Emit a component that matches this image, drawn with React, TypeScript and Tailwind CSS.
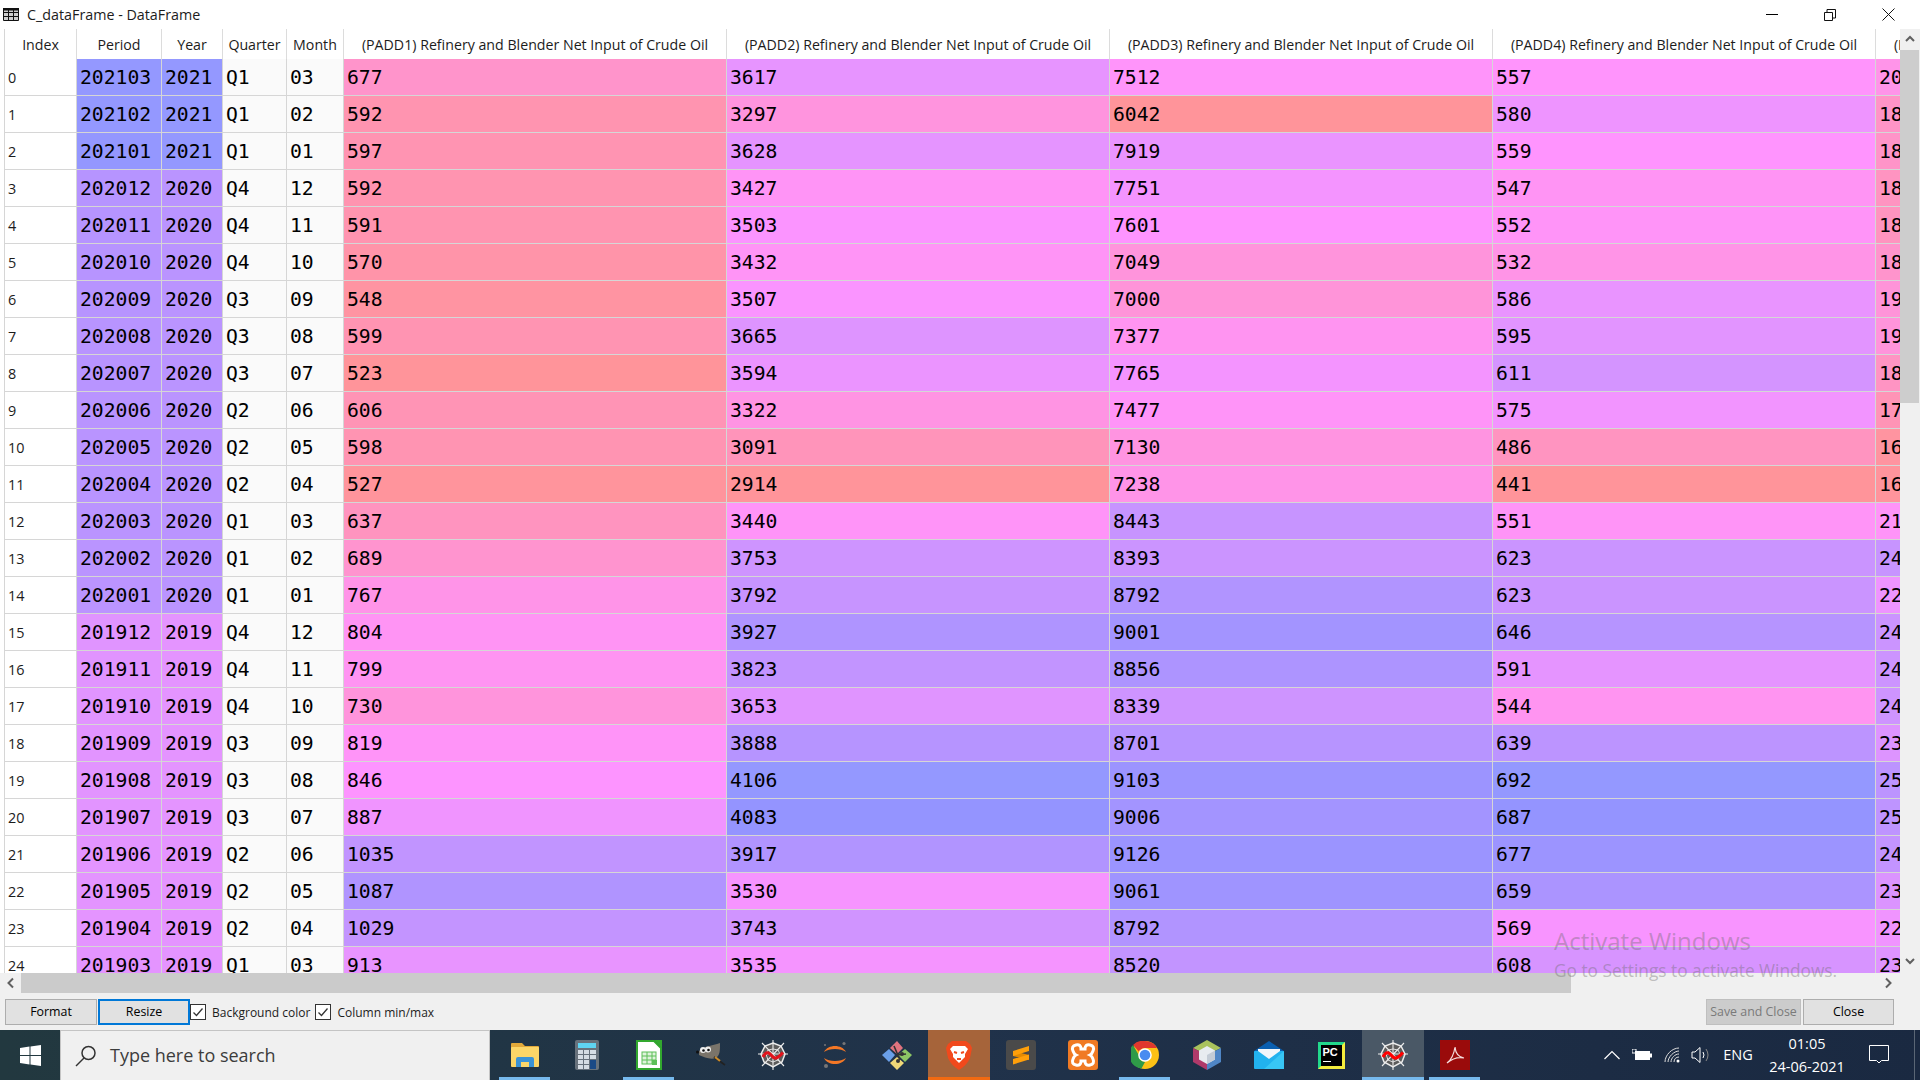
import React from "react";

// year, period etc. come straight off the screenshot; last column is clipped so only first digits matter
const rows: [string, string, string, string, number, number, number, number, number][] = [
  ["202103", "2021", "Q1", "03", 677, 3617, 7512, 557, 2034],
  ["202102", "2021", "Q1", "02", 592, 3297, 6042, 580, 1850],
  ["202101", "2021", "Q1", "01", 597, 3628, 7919, 559, 1860],
  ["202012", "2020", "Q4", "12", 592, 3427, 7751, 547, 1820],
  ["202011", "2020", "Q4", "11", 591, 3503, 7601, 552, 1810],
  ["202010", "2020", "Q4", "10", 570, 3432, 7049, 532, 1880],
  ["202009", "2020", "Q3", "09", 548, 3507, 7000, 586, 1950],
  ["202008", "2020", "Q3", "08", 599, 3665, 7377, 595, 1960],
  ["202007", "2020", "Q3", "07", 523, 3594, 7765, 611, 1830],
  ["202006", "2020", "Q2", "06", 606, 3322, 7477, 575, 1760],
  ["202005", "2020", "Q2", "05", 598, 3091, 7130, 486, 1640],
  ["202004", "2020", "Q2", "04", 527, 2914, 7238, 441, 1620],
  ["202003", "2020", "Q1", "03", 637, 3440, 8443, 551, 2120],
  ["202002", "2020", "Q1", "02", 689, 3753, 8393, 623, 2460],
  ["202001", "2020", "Q1", "01", 767, 3792, 8792, 623, 2250],
  ["201912", "2019", "Q4", "12", 804, 3927, 9001, 646, 2440],
  ["201911", "2019", "Q4", "11", 799, 3823, 8856, 591, 2430],
  ["201910", "2019", "Q4", "10", 730, 3653, 8339, 544, 2420],
  ["201909", "2019", "Q3", "09", 819, 3888, 8701, 639, 2340],
  ["201908", "2019", "Q3", "08", 846, 4106, 9103, 692, 2520],
  ["201907", "2019", "Q3", "07", 887, 4083, 9006, 687, 2510],
  ["201906", "2019", "Q2", "06", 1035, 3917, 9126, 677, 2480],
  ["201905", "2019", "Q2", "05", 1087, 3530, 9061, 659, 2350],
  ["201904", "2019", "Q2", "04", 1029, 3743, 8792, 569, 2240],
  ["201903", "2019", "Q1", "03", 913, 3535, 8520, 608, 2330],
];

const padd = (n: number) => `(PADD${n}) Refinery and Blender Net Input of Crude Oil`;

// same colour rule as the dataframe editor: hue .66 at max, .99 at min, sat .7, alpha .6 on white
function heat(v: number, min: number, max: number) {
  const h = (0.66 + (0.33 * (max - v)) / (max - min)) * 6;
  const i = Math.floor(h);
  const f = h - i;
  const p = 0.3;
  const q = 1 - 0.7 * f;
  const t = 1 - 0.7 * (1 - f);
  const rgb = [[1, t, p], [q, 1, p], [p, 1, t], [p, q, 1], [t, p, 1], [1, p, q]][i % 6];
  const [r, g, b] = rgb.map((c) => Math.round((c * 0.6 + 0.4) * 255));
  return `rgb(${r},${g},${b})`;
}

const cell = "border-r border-b border-[#d6d6d6] pl-[3px] pt-[2px] overflow-hidden whitespace-nowrap h-[37px] font-['DejaVu_Sans_Mono',monospace] text-[19.7px] text-black text-left";
const head = "border-r border-[#dcdcdc] h-[30px] pt-[2px] font-normal text-center text-[14.2px] text-[#1c1c1c] overflow-hidden whitespace-nowrap bg-white";

function Table() {
  return (
    <table className="table-fixed border-separate border-spacing-0 w-[2254px] border-l border-[#d6d6d6]">
      <colgroup>
        <col className="w-[72px]" />
        <col className="w-[85px]" />
        <col className="w-[61px]" />
        <col className="w-[64px]" />
        <col className="w-[57px]" />
        <col className="w-[383px]" />
        <col className="w-[383px]" />
        <col className="w-[383px]" />
        <col className="w-[383px]" />
        <col className="w-[383px]" />
      </colgroup>
      <thead>
        <tr>
          {["Index", "Period", "Year", "Quarter", "Month", padd(1), padd(2), padd(3), padd(4), padd(5)].map((h) => (
            <th key={h} className={head}>{h}</th>
          ))}
        </tr>
      </thead>
      <tbody>
        {rows.map((r, i) => (
          <tr key={r[0]}>
            <td className="border-r border-b border-[#d6d6d6] pl-[3px] pt-[2px] h-[37px] bg-white text-[14.4px] text-[#1c1c1c] text-left">{i}</td>
            <td className={cell} style={{ backgroundColor: heat(+r[0], 201601, 202103) }}>{r[0]}</td>
            <td className={cell} style={{ backgroundColor: heat(+r[1], 2016, 2021) }}>{r[1]}</td>
            <td className={cell + " bg-[#fafafa]"}>{r[2]}</td>
            <td className={cell + " bg-[#fafafa]"}>{r[3]}</td>
            <td className={cell} style={{ backgroundColor: heat(r[4], 523, 1190) }}>{r[4]}</td>
            <td className={cell} style={{ backgroundColor: heat(r[5], 2914, 4106) }}>{r[5]}</td>
            <td className={cell} style={{ backgroundColor: heat(r[6], 6042, 9300) }}>{r[6]}</td>
            <td className={cell} style={{ backgroundColor: heat(r[7], 441, 692) }}>{r[7]}</td>
            <td className={cell} style={{ backgroundColor: heat(r[8], 1610, 2760) }}>{r[8]}</td>
          </tr>
        ))}
      </tbody>
    </table>
  );
}

function Chevron({ dir }: { dir: "up" | "down" | "left" | "right" }) {
  const d = { up: "M2 7 L6 3 L10 7", down: "M2 4 L6 8 L10 4", left: "M8 1.5 L3.5 6 L8 10.5", right: "M4 1.5 L8.5 6 L4 10.5" }[dir];
  return (
    <svg width="12" height="12" viewBox="0 0 12 12" fill="none" stroke="#606060" strokeWidth="2">
      <path d={d} />
    </svg>
  );
}

function Check() {
  return (
    <span className="w-[16px] h-[16px] border border-[#333] bg-white flex items-center justify-center shrink-0">
      <svg width="12" height="12" viewBox="0 0 12 12" fill="none" stroke="#333" strokeWidth="1.3">
        <path d="M1.5 6.5 L4.5 9.5 L10.5 2.5" />
      </svg>
    </span>
  );
}

const Web = ({ wave = "#e0141c" }: { wave?: string }) => (
  <svg width="30" height="30" viewBox="0 0 30 30" fill="none">
    <path d="M15 3 L23 6 L27 14 L24 22 L15 27 L6 22 L3 14 L7 6 Z" fill="#5c5c5c" />
    <g stroke="#ececec" strokeWidth="1.1">
      <path d="M15 0 V30 M0 14 H30 M4 3 L26 26 M26 3 L4 26" />
      <path d="M15 3 L23 6 L27 14 L24 22 L15 27 L6 22 L3 14 L7 6 Z" strokeWidth="1.5" />
      <path d="M15 9 L20 10 L22 14 L20 20 L15 22 L10 20 L8 14 L10 10 Z" strokeWidth="0.9" />
    </g>
    <path d="M5 17 C8 11 11 12 14 16 C17 20 20 18 25 12.5" stroke={wave} strokeWidth="3.2" />
  </svg>
);

const icons: { key: string; bar?: "blue" | "orange"; bg?: string; node: React.ReactNode }[] = [
  {
    key: "explorer",
    bar: "blue",
    node: (
      <svg width="30" height="26" viewBox="0 0 30 26">
        <path d="M1 2 Q1 1 2 1 H12 L15 4 H28 Q29 4 29 5 V8 H1 Z" fill="#e2a93a" />
        <rect x="1" y="5" width="28" height="20" rx="1" fill="#fcd668" />
        <path d="M6 25 V17 Q6 15 8 15 H22 Q24 15 24 17 V25 H19 V20 H11 V25 Z" fill="#3b93d6" />
      </svg>
    ),
  },
  {
    key: "calc",
    node: (
      <svg width="24" height="30" viewBox="0 0 24 30">
        <rect width="24" height="30" rx="2" fill="#68727c" />
        <rect x="3" y="3" width="18" height="5" fill="#5fd4f2" />
        {[10, 15, 20, 25].map((y) => [3, 9].map((x) => <rect key={`${x}${y}`} x={x} y={y} width="5" height="4" fill="#d6dde4" />))}
        {[10, 15].map((y) => <rect key={y} x="15" y={y} width="6" height="4" fill="#d6dde4" />)}
        <rect x="15" y="20" width="6" height="9" fill="#1b4a86" />
      </svg>
    ),
  },
  {
    key: "localc",
    bar: "blue",
    node: (
      <svg width="26" height="30" viewBox="0 0 26 30">
        <path d="M1 1 H18 L25 8 V29 H1 Z" fill="#fff" stroke="#32a82e" strokeWidth="2" />
        <path d="M18 0 H26 V8 Z" fill="#32a82e" />
        <g stroke="#5cbf58" strokeWidth="1" fill="#dff3dc">
          <rect x="6" y="12" width="14" height="12" />
          <path d="M6 16 H20 M6 20 H20 M11 12 V24 M16 12 V24" />
        </g>
        <rect x="16" y="20" width="5" height="5" fill="#5cbf58" />
      </svg>
    ),
  },
  {
    key: "gimp",
    node: (
      <svg width="30" height="24" viewBox="0 0 30 24">
        <path d="M3 8 C8 3 16 3 24 0 C24 8 24 12 20 15 C14 17 8 14 3 12 Z" fill="#7a746a" />
        <path d="M18 14 L29 22" stroke="#222" strokeWidth="1.6" />
        <path d="M19 14 L24 18" stroke="#c98a2a" strokeWidth="2.2" />
        <circle cx="1.5" cy="9" r="1.5" fill="#111" />
        <circle cx="7" cy="7" r="3" fill="#eee" />
        <circle cx="12" cy="6.5" r="3" fill="#eee" />
        <circle cx="7.5" cy="7.5" r="1.3" fill="#111" />
        <circle cx="12.5" cy="7" r="1.3" fill="#111" />
      </svg>
    ),
  },
  { key: "spyder1", node: <Web /> },
  {
    key: "jupyter",
    node: (
      <svg width="30" height="30" viewBox="0 0 30 30" fill="#f37726">
        <path d="M4 12 C8 4 22 4 26 12 C21 8 9 8 4 12 Z" />
        <path d="M4 18 C9 22 21 22 26 18 C22 26 8 26 4 18 Z" />
        <circle cx="24" cy="3.5" r="1.6" fill="#767677" />
        <circle cx="6" cy="26" r="2" fill="#767677" />
        <circle cx="5" cy="5" r="1" fill="#767677" />
      </svg>
    ),
  },
  {
    key: "gitgui",
    node: (
      <svg width="30" height="30" viewBox="0 0 30 30">
        <path d="M15 1 L8 8 L15 14 L21 8 Z" fill="#e0737e" />
        <path d="M7 9 L0 15 L7 22 L13 15 Z" fill="#6a9fe8" />
        <path d="M23 9 L16 15 L23 22 L30 15 Z" fill="#8cc665" />
        <path d="M15 17 L8 23 L15 30 L22 23 Z" fill="#f0d878" />
        <path d="M12 6 L18 20 M15 15 L24 14" stroke="#333" strokeWidth="1.6" />
        <circle cx="16" cy="21" r="2" fill="#333" />
        <circle cx="20" cy="14" r="2" fill="#333" />
      </svg>
    ),
  },
  {
    key: "brave",
    bar: "orange",
    bg: "bg-[#a6643a]",
    node: (
      <svg width="26" height="30" viewBox="0 0 26 30">
        <path d="M6 1 H20 L24 4 L26 8 L24 18 C22 23 18 27 13 30 C8 27 4 23 2 18 L0 8 L2 4 Z" fill="#f1491c" />
        <path d="M7 6 H19 L22 9 L19 14 L19 17 L15 21 L13 23 L11 21 L7 17 L7 14 L4 9 Z" fill="#fff" />
        <path d="M8 12 L11 13 M18 12 L15 13 M11 19 H15" stroke="#f1491c" strokeWidth="2" />
      </svg>
    ),
  },
  {
    key: "sublime",
    node: (
      <svg width="30" height="30" viewBox="0 0 30 30">
        <rect width="30" height="30" rx="3" fill="#4a4a4a" />
        <path d="M7 11 L23 15 V20 L7 16 Z" fill="#e58a00" />
        <path d="M7 11 L23 6 V11 L7 16 Z M7 19 L23 14.5 V19.5 L7 24.5 Z" fill="#ff9f0a" />
      </svg>
    ),
  },
  {
    key: "xampp",
    node: (
      <svg width="30" height="30" viewBox="0 0 30 30">
        <rect width="30" height="30" rx="3" fill="#f07a24" />
        <path d="M8 5 Q13 4 13 9 H17 Q17 4 22 5 Q27 6 25 11 Q24 14 22 15 Q24 16 25 19 Q27 24 22 25 Q17 26 17 21 H13 Q13 26 8 25 Q3 24 5 19 Q6 16 8 15 Q6 14 5 11 Q3 6 8 5 Z" fill="none" stroke="#fff" strokeWidth="3" />
      </svg>
    ),
  },
  {
    key: "chrome",
    bar: "blue",
    node: (
      <svg width="28" height="28" viewBox="0 0 28 28">
        <circle cx="14" cy="14" r="14" fill="#fbc116" />
        <path d="M14 0 A14 14 0 0 1 26.1 7 H14 A7 7 0 0 0 7.9 10.5 L2 3.9 A14 14 0 0 1 14 0 Z" fill="#e0382e" />
        <path d="M2 4 L8 14.5 A7 7 0 0 0 14 21 L10.5 27.6 A14 14 0 0 1 2 4 Z" fill="#2f9a48" />
        <circle cx="14" cy="14" r="6.8" fill="#fff" />
        <circle cx="14" cy="14" r="5.3" fill="#4a8cf0" />
      </svg>
    ),
  },
  {
    key: "netbeans",
    node: (
      <svg width="28" height="30" viewBox="0 0 28 30">
        <path d="M14 0 L28 8 L14 15 L0 8 Z" fill="#a9c25c" />
        <path d="M0 8 L14 15 V30 L0 22 Z" fill="#b03a6a" />
        <path d="M28 8 L14 15 V30 L28 22 Z" fill="#4f86c6" />
        <path d="M14 6 L22 10.5 V19.5 L14 24 L6 19.5 V10.5 Z" fill="#e8ecf0" />
        <path d="M14 15 L22 10.5 V19.5 L14 24 Z" fill="#c4ccd6" />
      </svg>
    ),
  },
  {
    key: "mail",
    node: (
      <svg width="30" height="28" viewBox="0 0 30 28">
        <path d="M0 10 L15 0 L30 10 V12 H0 Z" fill="#0a5fb0" />
        <rect y="10" width="30" height="18" rx="1" fill="#22b2ee" />
        <path d="M4 8 H26 V10 L15 18 L4 10 Z" fill="#f2f6fa" />
        <path d="M30 10 V28 H10 Z" fill="#38c6f5" />
      </svg>
    ),
  },
  {
    key: "pycharm",
    node: (
      <div className="w-[27px] h-[27px] bg-black border-[3px] border-[#f4ec3c] border-l-[#22d88c] border-t-[#22d88c] flex flex-col pl-[2px] pt-[1px]">
        <span className="font-['Liberation_Sans',sans-serif] font-bold text-[11px] leading-[12px] text-white">PC</span>
        <span className="mt-[3px] w-[8px] h-[1.5px] bg-white" />
      </div>
    ),
  },
  { key: "spyder2", bar: "blue", bg: "bg-[#4a5866]", node: <Web wave="#f00" /> },
  {
    key: "acrobat",
    bar: "blue",
    node: (
      <svg width="30" height="30" viewBox="0 0 30 30">
        <rect width="30" height="30" fill="#9a0b0b" />
        <path d="M7 23 C11 20 14 14 15 7 C15.5 13 18 17 24 18 C19 17 13 18 7 23 Z" fill="none" stroke="#f5dcdc" strokeWidth="1.2" />
      </svg>
    ),
  },
];

function Taskbar() {
  return (
    <div className="h-[50px] shrink-0 flex bg-linear-to-r from-[#22383f] via-[#20324a] to-[#1a2941] font-['Open_Sans',sans-serif] text-white">
      <div className="w-[60px] flex items-center justify-center">
        <svg width="21" height="21" viewBox="0 0 21 21" fill="#fff">
          <path d="M0 3 L9.5 1.6 V10 H0 Z M10.5 1.4 L21 0 V10 H10.5 Z M0 11 H9.5 V19.4 L0 18 Z M10.5 11 H21 V21 L10.5 19.6 Z" />
        </svg>
      </div>
      <div className="w-[430px] bg-[#f0f0f0] border border-[#c4c4c4] border-b-0 flex items-center pl-[14px] gap-[13px]">
        <svg width="22" height="22" viewBox="0 0 22 22" fill="none" stroke="#333" strokeWidth="1.5">
          <circle cx="13.5" cy="8" r="6.5" />
          <path d="M9 13 L1 21" />
        </svg>
        <span className="text-[18px] text-[#3c3c3c]">Type here to search</span>
      </div>
      <div className="ml-[4px] flex">
        {icons.map((ic) => (
          <div key={ic.key} className={`relative w-[62px] h-[50px] flex items-center justify-center ${ic.bg ?? ""}`}>
            {ic.node}
            {ic.bar === "blue" && <span className={`absolute bottom-0 h-[3px] bg-[#76b9ed] ${ic.key === "spyder2" ? "left-0 right-0" : "left-[5px] right-[6px]"}`} />}
            {ic.bar === "orange" && <span className="absolute bottom-0 left-0 right-0 h-[3px] bg-[#f26a12]" />}
          </div>
        ))}
      </div>
      <div className="ml-auto flex items-center">
        <div className="w-[30px] flex justify-center">
          <svg width="16" height="10" viewBox="0 0 16 10" fill="none" stroke="#fff" strokeWidth="1.2"><path d="M0.5 9 L8 1.5 L15.5 9" /></svg>
        </div>
        <div className="w-[30px] flex justify-center">
          <svg width="20" height="12" viewBox="0 0 20 12">
            <rect x="3" y="2" width="15" height="9" fill="#fff" />
            <rect x="18" y="4.5" width="2" height="4" fill="#fff" />
            <rect x="0" y="0" width="4" height="4" fill="none" stroke="#fff" />
          </svg>
        </div>
        <div className="w-[30px] flex justify-center">
          <svg width="16" height="16" viewBox="0 0 16 16" fill="none" stroke="#ddd" strokeWidth="1">
            <path d="M1 15 C1 8 8 1 15 1 M4 15 C4 10 10 4 15 4 M7 15 C7 11 11 7 15 7 M10 15 C10 12 12 10 15 10" />
            <circle cx="14" cy="14" r="1.5" fill="#fff" stroke="none" />
          </svg>
        </div>
        <div className="w-[28px] flex justify-center">
          <svg width="20" height="18" viewBox="0 0 20 18" fill="none" stroke="#fff" strokeWidth="1">
            <path d="M1 6 H4 L9 1.5 V16.5 L4 12 H1 Z M12 6 Q14 9 12 12" />
            <path d="M15 3 Q19 9 15 15" stroke="#888" />
          </svg>
        </div>
        <div className="w-[46px] text-center text-[14.5px]">ENG</div>
        <div className="w-[92px] text-center text-[14.5px] leading-[23px]">
          <div>01:05</div>
          <div>24-06-2021</div>
        </div>
        <div className="w-[52px] flex justify-center">
          <svg width="20" height="20" viewBox="0 0 20 20" fill="none" stroke="#fff" strokeWidth="1">
            <path d="M0.5 0.5 H19.5 V15.5 H12.5 L10 18 L7.5 15.5 H0.5 Z" />
          </svg>
        </div>
        <div className="w-[15px] h-full pl-[9px]">
          <div className="h-full border-l border-[#5a6675]" />
        </div>
      </div>
    </div>
  );
}

const btn = "h-[26px] pt-[1px] flex items-center justify-center text-[12.4px]";

export default function App() {
  return (
    <div className="relative w-[1920px] h-[1080px] flex flex-col overflow-hidden bg-[#f0f0f0] font-['Open_Sans',sans-serif]">
      <div className="h-[29px] shrink-0 bg-white flex items-center">
        <svg className="ml-[3px]" width="16" height="13" viewBox="0 0 16 13" fill="#cfcfcf" stroke="#111" strokeWidth="1">
          <path d="M0.5 0.5 H15.5 V12.5 H0.5 Z" />
          <path d="M0.5 4.5 H15.5 M0.5 8.5 H15.5 M5.5 0.5 V12.5 M10.5 0.5 V12.5" fill="none" />
          <rect x="0" y="0" width="16" height="2.5" fill="#111" stroke="none" />
        </svg>
        <span className="ml-[8px] text-[14.3px] text-[#1c1c1c]">C_dataFrame - DataFrame</span>
        <div className="ml-auto flex mr-[3px]">
          <div className="w-[58px] h-[29px] flex items-center justify-center">
            <svg width="12" height="2" viewBox="0 0 12 2"><rect width="12" height="1" fill="#000" /></svg>
          </div>
          <div className="w-[58px] h-[29px] flex items-center justify-center">
            <svg width="12" height="12" viewBox="0 0 12 12" fill="none" stroke="#111">
              <path d="M0.5 3.5 H8.5 V11.5 H0.5 Z M3 3 V0.5 H11.5 V9 H9" />
            </svg>
          </div>
          <div className="w-[58px] h-[29px] flex items-center justify-center">
            <svg width="13" height="13" viewBox="0 0 13 13" stroke="#111"><path d="M0.5 0.5 L12.5 12.5 M12.5 0.5 L0.5 12.5" /></svg>
          </div>
        </div>
      </div>

      <div className="h-[944px] shrink-0 flex">
        <div className="w-[1900px] pl-[4px] bg-white overflow-hidden">
          <Table />
        </div>
        <div className="w-[20px] flex flex-col bg-[#f0f0f0]">
          <div className="h-[21px] flex items-center justify-center"><Chevron dir="up" /></div>
          <div className="h-[353px] bg-[#cdcdcd] mr-[1px]" />
          <div className="mt-auto h-[21px] flex items-center justify-center mb-[2px]"><Chevron dir="down" /></div>
        </div>
      </div>

      <div className="h-[20px] shrink-0 flex items-center">
        <div className="w-[21px] flex justify-center"><Chevron dir="left" /></div>
        <div className="w-[1550px] h-full bg-[#cbcbcb]" />
        <div className="ml-auto w-[44px]"><div className="w-[24px] flex justify-center"><Chevron dir="right" /></div></div>
      </div>

      <div className="flex-1 flex items-start pt-[6px] pl-[5px] text-[#1c1c1c]">
        <button className={btn + " w-[92px] bg-[#e1e1e1] border border-[#adadad] text-black"}>Format</button>
        <button className={btn + " w-[92px] ml-[1px] bg-[#e1e1e1] border-2 border-[#0078d7] text-black"}>Resize</button>
        <div className="flex items-center gap-[6px] h-[26px] text-[12px]"><Check /><span className="pt-[2px]">Background color</span></div>
        <div className="ml-[5px] flex items-center gap-[6px] h-[26px] text-[12px]"><Check /><span className="pt-[2px]">Column min/max</span></div>
        <div className="ml-auto mr-[26px] flex gap-[2px]">
          <button className={btn + " w-[95px] bg-[#cccccc] border border-[#bfbfbf] text-[#7a7a7a]"}>Save and Close</button>
          <button className={btn + " w-[91px] bg-[#e1e1e1] border border-[#adadad] text-black"}>Close</button>
        </div>
      </div>

      <Taskbar />

      <div className="absolute left-[1554px] top-[925px] text-[#6b6b6b]/40 pointer-events-none">
        <div className="text-[24px] leading-[32px]">Activate Windows</div>
        <div className="text-[17.3px] leading-[22px] mt-[3px]">Go to Settings to activate Windows.</div>
      </div>
    </div>
  );
}
